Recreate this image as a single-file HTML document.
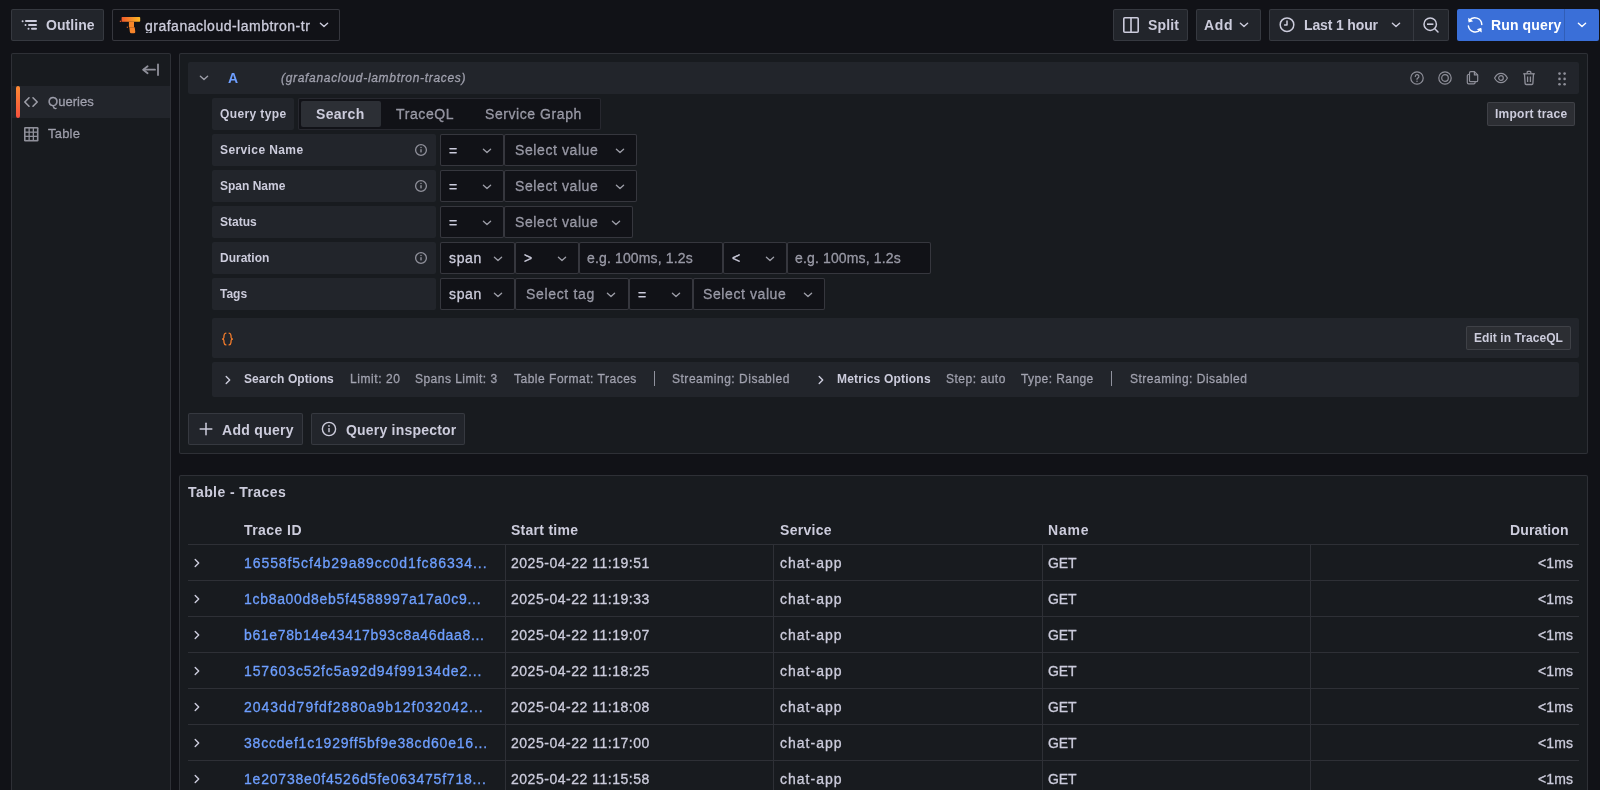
<!DOCTYPE html>
<html><head><meta charset="utf-8">
<style>
*{box-sizing:border-box;margin:0;padding:0}
html,body{width:1600px;height:790px;overflow:hidden;background:#111217;font-family:"Liberation Sans",sans-serif;color:#ccccdc;font-size:14px}
.a{position:absolute}
.t{position:absolute;white-space:pre;will-change:transform}
svg{position:absolute;display:block;overflow:visible}
</style></head><body>
<div class="a" style="left:11px;top:9px;width:93px;height:32px;background:#22252b;border:1px solid rgba(204,204,220,0.12);border-radius:2px;"></div>
<svg style="left:20px;top:17px" width="20" height="16" viewBox="0 0 20 16"><g fill="#ccccdc">
<rect x="5" y="3" width="12" height="2" rx="1"/><rect x="8" y="7" width="9" height="2" rx="1"/><rect x="11" y="10.8" width="6" height="2" rx="1"/>
<circle cx="2.6" cy="4.2" r="1"/><circle cx="5.5" cy="8" r="1"/><circle cx="8.5" cy="11.8" r="1"/></g></svg>
<div class="a" style="left:112px;top:9px;width:228px;height:32px;background:#111217;border:1px solid rgba(204,204,220,0.2);border-radius:2px;"></div>
<svg style="left:119px;top:15px" width="22" height="20" viewBox="0 0 22 20">
<defs><linearGradient id="tg" x1="0" y1="0" x2="1" y2="0"><stop offset="0" stop-color="#f15a2b"/><stop offset="1" stop-color="#fbb925"/></linearGradient></defs>
<path d="M3.2 1.9h17.2a0.8 0.8 0 0 1 0.8 0.8v3.3a0.8 0.8 0 0 1-0.8 0.8H3.2a0.6 0.6 0 0 1-0.6-0.6V2.5a0.6 0.6 0 0 1 0.6-0.6z" fill="url(#tg)"/>
<path d="M9.9 6.8h5.1v5.5H9.9z" fill="#f6862a"/>
<path d="M10.3 12.3h5.4l0.6 4.6a1.4 1.4 0 0 1-1.4 1.4h-2.6a1.4 1.4 0 0 1-1.4-1.2z" fill="#f7842a"/>
<rect x="0.8" y="5.7" width="1.3" height="1.2" fill="#ee5a2a"/><rect x="7.8" y="11.6" width="1" height="1.3" fill="#ee6a2a"/>
</svg>
<svg style="left:317.5px;top:20px" width="12" height="10" viewBox="0 0 12 10"><polyline points="2.4,3.3 6,6.6 9.6,3.3" fill="none" stroke="#ccccdc" stroke-width="1.4" stroke-linecap="round" stroke-linejoin="round"/></svg>
<div class="a" style="left:1113px;top:9px;width:75px;height:32px;background:#22252b;border:1px solid rgba(204,204,220,0.12);border-radius:2px;"></div>
<svg style="left:1122px;top:16px" width="18" height="18" viewBox="0 0 18 18"><rect x="1.8" y="1.8" width="14.4" height="14.4" rx="1" fill="none" stroke="#ccccdc" stroke-width="1.6"/><line x1="9" y1="2" x2="9" y2="16" stroke="#ccccdc" stroke-width="1.6"/></svg>
<div class="a" style="left:1196px;top:9px;width:65px;height:32px;background:#22252b;border:1px solid rgba(204,204,220,0.12);border-radius:2px;"></div>
<svg style="left:1238px;top:20px" width="12" height="10" viewBox="0 0 12 10"><polyline points="2.4,3.3 6,6.6 9.6,3.3" fill="none" stroke="#ccccdc" stroke-width="1.4" stroke-linecap="round" stroke-linejoin="round"/></svg>
<div class="a" style="left:1269px;top:9px;width:180px;height:32px;background:#22252b;border:1px solid rgba(204,204,220,0.12);border-radius:2px;"></div>
<div class="a" style="left:1413px;top:9px;width:1px;height:32px;background:rgba(204,204,220,0.12);"></div>
<svg style="left:1278px;top:16px" width="18" height="18" viewBox="0 0 18 18"><circle cx="9" cy="8.7" r="6.8" fill="none" stroke="#ccccdc" stroke-width="1.5"/><polyline points="9,5 9,9 6.6,9" fill="none" stroke="#ccccdc" stroke-width="1.5" stroke-linecap="round" stroke-linejoin="round"/></svg>
<svg style="left:1390px;top:20px" width="12" height="10" viewBox="0 0 12 10"><polyline points="2.4,3.3 6,6.6 9.6,3.3" fill="none" stroke="#ccccdc" stroke-width="1.4" stroke-linecap="round" stroke-linejoin="round"/></svg>
<svg style="left:1422px;top:16px" width="18" height="18" viewBox="0 0 18 18"><circle cx="8.2" cy="8.2" r="6.2" fill="none" stroke="#ccccdc" stroke-width="1.5"/><line x1="5" y1="8.2" x2="11.4" y2="8.2" stroke="#ccccdc" stroke-width="1.6"/><line x1="12.8" y1="12.8" x2="16" y2="16" stroke="#ccccdc" stroke-width="1.5" stroke-linecap="round"/></svg>
<div class="a" style="left:1457px;top:9px;width:142px;height:32px;background:#3a6fd8;border-radius:2px;"></div>
<div class="a" style="left:1564px;top:9px;width:1px;height:32px;background:rgba(0,0,0,0.15);"></div>
<svg style="left:1466px;top:16px" width="18" height="18" viewBox="0 0 18 18"><g fill="none" stroke="#fff" stroke-width="1.5" stroke-linecap="round">
<path d="M3.2 4.6A7 7 0 0 1 15.8 8.6"/><path d="M2.4 10A7 7 0 0 0 14.6 13.6"/></g>
<g fill="#fff"><path d="M2.2 1.8L2.6 6.6L7.2 5.2Z"/><path d="M15.8 16.4L15.3 11.8L10.8 13.2Z"/></g></svg>
<svg style="left:1575.5px;top:20px" width="12" height="10" viewBox="0 0 12 10"><polyline points="2.4,3.3 6,6.6 9.6,3.3" fill="none" stroke="#fff" stroke-width="1.4" stroke-linecap="round" stroke-linejoin="round"/></svg>
<div class="a" style="left:11px;top:53px;width:160px;height:800px;background:#181b1f;border:1px solid rgba(204,204,220,0.12);border-radius:2px;"></div>
<svg style="left:140px;top:60px" width="22" height="20" viewBox="0 0 22 20"><g fill="none" stroke="#8f909a" stroke-width="1.8" stroke-linecap="round" stroke-linejoin="round"><polyline points="7.6,6.3 3.2,9.7 7.6,13.3"/><line x1="3.6" y1="9.7" x2="15" y2="9.7"/><line x1="18" y1="4.5" x2="18" y2="15"/></g></svg>
<div class="a" style="left:12px;top:86px;width:158px;height:32px;background:#22252b;"></div>
<div class="a" style="left:16px;top:86px;width:4px;height:32px;background:linear-gradient(#ff8a33,#f5503e);border-radius:2px;"></div>
<svg style="left:22px;top:94px" width="18" height="16" viewBox="0 0 18 16"><g fill="none" stroke="#9d9ea8" stroke-width="1.6" stroke-linecap="round" stroke-linejoin="round"><polyline points="7,3.8 2.8,8 7,12.2"/><polyline points="11,3.8 15.2,8 11,12.2"/></g></svg>
<svg style="left:22px;top:125px" width="18" height="18" viewBox="0 0 18 18"><rect x="2" y="2" width="14.5" height="14.5" rx="1.2" fill="#8f909a"/>
<g fill="#181b1f"><rect x="3.6" y="3.6" width="2.9" height="2.9"/><rect x="7.8" y="3.6" width="2.9" height="2.9"/><rect x="12" y="3.6" width="2.9" height="2.9"/>
<rect x="3.6" y="7.8" width="2.9" height="2.9"/><rect x="7.8" y="7.8" width="2.9" height="2.9"/><rect x="12" y="7.8" width="2.9" height="2.9"/>
<rect x="3.6" y="12" width="2.9" height="2.9"/><rect x="7.8" y="12" width="2.9" height="2.9"/><rect x="12" y="12" width="2.9" height="2.9"/></g></svg>
<div class="a" style="left:179px;top:53px;width:1409px;height:401px;background:#181b1f;border:1px solid rgba(204,204,220,0.12);border-radius:2px;"></div>
<div class="a" style="left:188px;top:62px;width:1391px;height:32px;background:#22252b;border-radius:2px;"></div>
<svg style="left:198px;top:73px" width="12" height="10" viewBox="0 0 12 10"><polyline points="2.4,3.3 6,6.6 9.6,3.3" fill="none" stroke="#9d9ea8" stroke-width="1.4" stroke-linecap="round" stroke-linejoin="round"/></svg>
<svg style="left:1409px;top:70px" width="16" height="16" viewBox="0 0 16 16"><circle cx="8" cy="8" r="6.2" fill="none" stroke="#8e8f99" stroke-width="1.2"/><path d="M6.3 6.4a1.8 1.8 0 1 1 2.5 1.7c-.6.3-.8.6-.8 1.2" fill="none" stroke="#8e8f99" stroke-width="1.2" stroke-linecap="round"/><circle cx="8" cy="11.2" r=".75" fill="#8e8f99"/></svg>
<svg style="left:1437px;top:70px" width="16" height="16" viewBox="0 0 16 16"><circle cx="8" cy="8" r="6.2" fill="none" stroke="#8e8f99" stroke-width="1.2"/><circle cx="8" cy="8" r="3.3" fill="none" stroke="#8e8f99" stroke-width="1.2"/></svg>
<svg style="left:1465px;top:70px" width="16" height="16" viewBox="0 0 16 16"><g fill="none" stroke="#8e8f99" stroke-width="1.2" stroke-linejoin="round"><path d="M5.8 1.6h3.6l3.3 3.3v5.5a1.3 1.3 0 0 1-1.3 1.3H5.8a1.3 1.3 0 0 1-1.3-1.3V2.9a1.3 1.3 0 0 1 1.3-1.3z"/><path d="M4.5 4.5H3.6a1.3 1.3 0 0 0-1.3 1.3v6.8a1.3 1.3 0 0 0 1.3 1.3h5.2a1.3 1.3 0 0 0 1.3-1.3v-.9"/><path d="M9.4 1.6v3.3h3.3"/></g></svg>
<svg style="left:1493px;top:70px" width="16" height="16" viewBox="0 0 16 16"><path d="M1.6 8C3 5.2 5.3 3.3 8 3.3s5 1.9 6.4 4.7C13 10.8 10.7 12.7 8 12.7S3 10.8 1.6 8z" fill="none" stroke="#8e8f99" stroke-width="1.2" stroke-linejoin="round"/><circle cx="8" cy="8" r="2.3" fill="none" stroke="#8e8f99" stroke-width="1.2"/></svg>
<svg style="left:1521px;top:70px" width="16" height="16" viewBox="0 0 16 16"><g fill="none" stroke="#8e8f99" stroke-width="1.3" stroke-linejoin="round"><path d="M2.2 3.8h11.6"/><path d="M6.2 3.6V2.2a.8.8 0 0 1 .8-.8h2a.8.8 0 0 1 .8.8v1.4"/><path d="M3.5 3.8l.6 9.6a1.2 1.2 0 0 0 1.2 1.1h5.4a1.2 1.2 0 0 0 1.2-1.1l.6-9.6"/><path d="M6.6 6.5v5.4M9.4 6.5v5.4"/></g></svg>
<svg style="left:1554px;top:70px" width="16" height="16" viewBox="0 0 16 16"><g fill="#8e8f99"><circle cx="5.5" cy="3.6" r="1.3"/><circle cx="10.6" cy="3.6" r="1.3"/><circle cx="5.5" cy="8.9" r="1.3"/><circle cx="10.6" cy="8.9" r="1.3"/><circle cx="5.5" cy="14.3" r="1.3"/><circle cx="10.6" cy="14.3" r="1.3"/></g></svg>
<div class="a" style="left:1487px;top:102px;width:88px;height:24px;background:#2c2e33;border:1px solid rgba(204,204,220,0.12);border-radius:2px;"></div>
<div class="a" style="left:212px;top:98px;width:82px;height:32px;background:#22252b;border-radius:2px;"></div>
<div class="a" style="left:298px;top:98px;width:303px;height:32px;background:#111217;border:1px solid rgba(204,204,220,0.12);border-radius:2px;"></div>
<div class="a" style="left:301px;top:101px;width:80px;height:26px;background:#2c2f35;border-radius:2px;"></div>
<div class="a" style="left:212px;top:134px;width:224px;height:32px;background:#22252b;border-radius:2px;"></div>
<svg style="left:413px;top:142px" width="16" height="16" viewBox="0 0 16 16"><circle cx="8" cy="8" r="5.4" fill="none" stroke="#8f909a" stroke-width="1.3"/><rect x="7.3" y="7.2" width="1.4" height="3.2" fill="#8f909a"/><circle cx="8" cy="5.6" r=".75" fill="#8f909a"/></svg>
<div class="a" style="left:212px;top:170px;width:224px;height:32px;background:#22252b;border-radius:2px;"></div>
<svg style="left:413px;top:178px" width="16" height="16" viewBox="0 0 16 16"><circle cx="8" cy="8" r="5.4" fill="none" stroke="#8f909a" stroke-width="1.3"/><rect x="7.3" y="7.2" width="1.4" height="3.2" fill="#8f909a"/><circle cx="8" cy="5.6" r=".75" fill="#8f909a"/></svg>
<div class="a" style="left:212px;top:206px;width:224px;height:32px;background:#22252b;border-radius:2px;"></div>
<div class="a" style="left:212px;top:242px;width:224px;height:32px;background:#22252b;border-radius:2px;"></div>
<svg style="left:413px;top:250px" width="16" height="16" viewBox="0 0 16 16"><circle cx="8" cy="8" r="5.4" fill="none" stroke="#8f909a" stroke-width="1.3"/><rect x="7.3" y="7.2" width="1.4" height="3.2" fill="#8f909a"/><circle cx="8" cy="5.6" r=".75" fill="#8f909a"/></svg>
<div class="a" style="left:212px;top:278px;width:224px;height:32px;background:#22252b;border-radius:2px;"></div>
<div class="a" style="left:440px;top:134px;width:64px;height:32px;background:#111217;border:1px solid rgba(204,204,220,0.2);border-radius:2px;"></div>
<svg style="left:481px;top:145.5px" width="12" height="10" viewBox="0 0 12 10"><polyline points="2.4,3.3 6,6.6 9.6,3.3" fill="none" stroke="#9d9ea8" stroke-width="1.3" stroke-linecap="round" stroke-linejoin="round"/></svg>
<div class="a" style="left:504px;top:134px;width:133px;height:32px;background:#111217;border:1px solid rgba(204,204,220,0.2);border-radius:2px;"></div>
<svg style="left:613.5px;top:145.5px" width="12" height="10" viewBox="0 0 12 10"><polyline points="2.4,3.3 6,6.6 9.6,3.3" fill="none" stroke="#9d9ea8" stroke-width="1.3" stroke-linecap="round" stroke-linejoin="round"/></svg>
<div class="a" style="left:440px;top:170px;width:64px;height:32px;background:#111217;border:1px solid rgba(204,204,220,0.2);border-radius:2px;"></div>
<svg style="left:481px;top:181.5px" width="12" height="10" viewBox="0 0 12 10"><polyline points="2.4,3.3 6,6.6 9.6,3.3" fill="none" stroke="#9d9ea8" stroke-width="1.3" stroke-linecap="round" stroke-linejoin="round"/></svg>
<div class="a" style="left:504px;top:170px;width:133px;height:32px;background:#111217;border:1px solid rgba(204,204,220,0.2);border-radius:2px;"></div>
<svg style="left:613.5px;top:181.5px" width="12" height="10" viewBox="0 0 12 10"><polyline points="2.4,3.3 6,6.6 9.6,3.3" fill="none" stroke="#9d9ea8" stroke-width="1.3" stroke-linecap="round" stroke-linejoin="round"/></svg>
<div class="a" style="left:440px;top:206px;width:64px;height:32px;background:#111217;border:1px solid rgba(204,204,220,0.2);border-radius:2px;"></div>
<svg style="left:481px;top:217.5px" width="12" height="10" viewBox="0 0 12 10"><polyline points="2.4,3.3 6,6.6 9.6,3.3" fill="none" stroke="#9d9ea8" stroke-width="1.3" stroke-linecap="round" stroke-linejoin="round"/></svg>
<div class="a" style="left:504px;top:206px;width:129px;height:32px;background:#111217;border:1px solid rgba(204,204,220,0.2);border-radius:2px;"></div>
<svg style="left:609.5px;top:217.5px" width="12" height="10" viewBox="0 0 12 10"><polyline points="2.4,3.3 6,6.6 9.6,3.3" fill="none" stroke="#9d9ea8" stroke-width="1.3" stroke-linecap="round" stroke-linejoin="round"/></svg>
<div class="a" style="left:440px;top:242px;width:75px;height:32px;background:#111217;border:1px solid rgba(204,204,220,0.2);border-radius:2px;"></div>
<svg style="left:491.5px;top:253.5px" width="12" height="10" viewBox="0 0 12 10"><polyline points="2.4,3.3 6,6.6 9.6,3.3" fill="none" stroke="#9d9ea8" stroke-width="1.3" stroke-linecap="round" stroke-linejoin="round"/></svg>
<div class="a" style="left:515px;top:242px;width:64px;height:32px;background:#111217;border:1px solid rgba(204,204,220,0.2);border-radius:2px;"></div>
<svg style="left:555.5px;top:253.5px" width="12" height="10" viewBox="0 0 12 10"><polyline points="2.4,3.3 6,6.6 9.6,3.3" fill="none" stroke="#9d9ea8" stroke-width="1.3" stroke-linecap="round" stroke-linejoin="round"/></svg>
<div class="a" style="left:579px;top:242px;width:144px;height:32px;background:#111217;border:1px solid rgba(204,204,220,0.2);border-radius:2px;"></div>
<div class="a" style="left:723px;top:242px;width:64px;height:32px;background:#111217;border:1px solid rgba(204,204,220,0.2);border-radius:2px;"></div>
<svg style="left:763.5px;top:253.5px" width="12" height="10" viewBox="0 0 12 10"><polyline points="2.4,3.3 6,6.6 9.6,3.3" fill="none" stroke="#9d9ea8" stroke-width="1.3" stroke-linecap="round" stroke-linejoin="round"/></svg>
<div class="a" style="left:787px;top:242px;width:144px;height:32px;background:#111217;border:1px solid rgba(204,204,220,0.2);border-radius:2px;"></div>
<div class="a" style="left:440px;top:278px;width:75px;height:32px;background:#111217;border:1px solid rgba(204,204,220,0.2);border-radius:2px;"></div>
<svg style="left:491.5px;top:289.5px" width="12" height="10" viewBox="0 0 12 10"><polyline points="2.4,3.3 6,6.6 9.6,3.3" fill="none" stroke="#9d9ea8" stroke-width="1.3" stroke-linecap="round" stroke-linejoin="round"/></svg>
<div class="a" style="left:515px;top:278px;width:114px;height:32px;background:#111217;border:1px solid rgba(204,204,220,0.2);border-radius:2px;"></div>
<svg style="left:605px;top:289.5px" width="12" height="10" viewBox="0 0 12 10"><polyline points="2.4,3.3 6,6.6 9.6,3.3" fill="none" stroke="#9d9ea8" stroke-width="1.3" stroke-linecap="round" stroke-linejoin="round"/></svg>
<div class="a" style="left:629px;top:278px;width:64px;height:32px;background:#111217;border:1px solid rgba(204,204,220,0.2);border-radius:2px;"></div>
<svg style="left:669.5px;top:289.5px" width="12" height="10" viewBox="0 0 12 10"><polyline points="2.4,3.3 6,6.6 9.6,3.3" fill="none" stroke="#9d9ea8" stroke-width="1.3" stroke-linecap="round" stroke-linejoin="round"/></svg>
<div class="a" style="left:693px;top:278px;width:132px;height:32px;background:#111217;border:1px solid rgba(204,204,220,0.2);border-radius:2px;"></div>
<svg style="left:801.5px;top:289.5px" width="12" height="10" viewBox="0 0 12 10"><polyline points="2.4,3.3 6,6.6 9.6,3.3" fill="none" stroke="#9d9ea8" stroke-width="1.3" stroke-linecap="round" stroke-linejoin="round"/></svg>
<div class="a" style="left:212px;top:318px;width:1367px;height:40px;background:#22252b;border-radius:2px;"></div>
<svg style="left:0;top:0" width="1" height="1"><g fill="none" stroke="#ee7a2c" stroke-width="1.3" stroke-linecap="round"><path d="M225.9 333.2C224.5 333.4 224.1 334.2 224 335.6L223.9 337.5C223.8 338.5 223.3 339 222.1 339C223.3 339 223.8 339.5 223.9 340.5L224 342.4C224.1 343.8 224.5 344.6 225.9 344.8"/><path d="M229.1 333.2C230.5 333.4 230.9 334.2 231 335.6L231.1 337.5C231.2 338.5 231.7 339 232.9 339C231.7 339 231.2 339.5 231.1 340.5L231 342.4C230.9 343.8 230.5 344.6 229.1 344.8"/></g></svg>
<div class="a" style="left:1466px;top:326px;width:105px;height:24px;background:#2c2e33;border:1px solid rgba(204,204,220,0.12);border-radius:2px;"></div>
<div class="a" style="left:212px;top:362px;width:1367px;height:35px;background:#22252b;border-radius:2px;"></div>
<svg style="left:223px;top:374px" width="10" height="12" viewBox="0 0 10 12"><polyline points="3.2,2.5 6.7,6 3.2,9.5" fill="none" stroke="#ccccdc" stroke-width="1.4" stroke-linecap="round" stroke-linejoin="round"/></svg>
<div class="a" style="left:654px;top:371px;width:1px;height:15px;background:rgba(204,204,220,0.65);"></div>
<svg style="left:816px;top:374px" width="10" height="12" viewBox="0 0 10 12"><polyline points="3.2,2.5 6.7,6 3.2,9.5" fill="none" stroke="#ccccdc" stroke-width="1.4" stroke-linecap="round" stroke-linejoin="round"/></svg>
<div class="a" style="left:1111px;top:371px;width:1px;height:15px;background:rgba(204,204,220,0.65);"></div>
<div class="a" style="left:188px;top:413px;width:115px;height:32px;background:#22252b;border:1px solid rgba(204,204,220,0.12);border-radius:2px;"></div>
<svg style="left:198px;top:421px" width="16" height="16" viewBox="0 0 16 16"><g stroke="#ccccdc" stroke-width="1.5" stroke-linecap="round"><line x1="8" y1="2.2" x2="8" y2="13.8"/><line x1="2.2" y1="8" x2="13.8" y2="8"/></g></svg>
<div class="a" style="left:311px;top:413px;width:154px;height:32px;background:#22252b;border:1px solid rgba(204,204,220,0.12);border-radius:2px;"></div>
<svg style="left:321px;top:421px" width="16" height="16" viewBox="0 0 16 16"><circle cx="8" cy="8" r="6.6" fill="none" stroke="#ccccdc" stroke-width="1.4"/><rect x="7.3" y="7" width="1.4" height="4.2" fill="#ccccdc"/><circle cx="8" cy="4.9" r=".85" fill="#ccccdc"/></svg>
<div class="a" style="left:179px;top:475px;width:1409px;height:400px;background:#181b1f;border:1px solid rgba(204,204,220,0.12);border-radius:2px;"></div>
<div class="a" style="left:188px;top:544px;width:1391px;height:1px;background:rgba(204,204,220,0.12);"></div>
<div class="a" style="left:188px;top:580px;width:1391px;height:1px;background:rgba(204,204,220,0.12);"></div>
<div class="a" style="left:505px;top:545px;width:1px;height:35px;background:rgba(204,204,220,0.12);"></div>
<div class="a" style="left:773px;top:545px;width:1px;height:35px;background:rgba(204,204,220,0.12);"></div>
<div class="a" style="left:1042px;top:545px;width:1px;height:35px;background:rgba(204,204,220,0.12);"></div>
<div class="a" style="left:1310px;top:545px;width:1px;height:35px;background:rgba(204,204,220,0.12);"></div>
<svg style="left:192px;top:557px" width="10" height="12" viewBox="0 0 10 12"><polyline points="3.2,2.5 6.7,6 3.2,9.5" fill="none" stroke="#ccccdc" stroke-width="1.4" stroke-linecap="round" stroke-linejoin="round"/></svg>
<div class="a" style="left:188px;top:616px;width:1391px;height:1px;background:rgba(204,204,220,0.12);"></div>
<div class="a" style="left:505px;top:581px;width:1px;height:35px;background:rgba(204,204,220,0.12);"></div>
<div class="a" style="left:773px;top:581px;width:1px;height:35px;background:rgba(204,204,220,0.12);"></div>
<div class="a" style="left:1042px;top:581px;width:1px;height:35px;background:rgba(204,204,220,0.12);"></div>
<div class="a" style="left:1310px;top:581px;width:1px;height:35px;background:rgba(204,204,220,0.12);"></div>
<svg style="left:192px;top:593px" width="10" height="12" viewBox="0 0 10 12"><polyline points="3.2,2.5 6.7,6 3.2,9.5" fill="none" stroke="#ccccdc" stroke-width="1.4" stroke-linecap="round" stroke-linejoin="round"/></svg>
<div class="a" style="left:188px;top:652px;width:1391px;height:1px;background:rgba(204,204,220,0.12);"></div>
<div class="a" style="left:505px;top:617px;width:1px;height:35px;background:rgba(204,204,220,0.12);"></div>
<div class="a" style="left:773px;top:617px;width:1px;height:35px;background:rgba(204,204,220,0.12);"></div>
<div class="a" style="left:1042px;top:617px;width:1px;height:35px;background:rgba(204,204,220,0.12);"></div>
<div class="a" style="left:1310px;top:617px;width:1px;height:35px;background:rgba(204,204,220,0.12);"></div>
<svg style="left:192px;top:629px" width="10" height="12" viewBox="0 0 10 12"><polyline points="3.2,2.5 6.7,6 3.2,9.5" fill="none" stroke="#ccccdc" stroke-width="1.4" stroke-linecap="round" stroke-linejoin="round"/></svg>
<div class="a" style="left:188px;top:688px;width:1391px;height:1px;background:rgba(204,204,220,0.12);"></div>
<div class="a" style="left:505px;top:653px;width:1px;height:35px;background:rgba(204,204,220,0.12);"></div>
<div class="a" style="left:773px;top:653px;width:1px;height:35px;background:rgba(204,204,220,0.12);"></div>
<div class="a" style="left:1042px;top:653px;width:1px;height:35px;background:rgba(204,204,220,0.12);"></div>
<div class="a" style="left:1310px;top:653px;width:1px;height:35px;background:rgba(204,204,220,0.12);"></div>
<svg style="left:192px;top:665px" width="10" height="12" viewBox="0 0 10 12"><polyline points="3.2,2.5 6.7,6 3.2,9.5" fill="none" stroke="#ccccdc" stroke-width="1.4" stroke-linecap="round" stroke-linejoin="round"/></svg>
<div class="a" style="left:188px;top:724px;width:1391px;height:1px;background:rgba(204,204,220,0.12);"></div>
<div class="a" style="left:505px;top:689px;width:1px;height:35px;background:rgba(204,204,220,0.12);"></div>
<div class="a" style="left:773px;top:689px;width:1px;height:35px;background:rgba(204,204,220,0.12);"></div>
<div class="a" style="left:1042px;top:689px;width:1px;height:35px;background:rgba(204,204,220,0.12);"></div>
<div class="a" style="left:1310px;top:689px;width:1px;height:35px;background:rgba(204,204,220,0.12);"></div>
<svg style="left:192px;top:701px" width="10" height="12" viewBox="0 0 10 12"><polyline points="3.2,2.5 6.7,6 3.2,9.5" fill="none" stroke="#ccccdc" stroke-width="1.4" stroke-linecap="round" stroke-linejoin="round"/></svg>
<div class="a" style="left:188px;top:760px;width:1391px;height:1px;background:rgba(204,204,220,0.12);"></div>
<div class="a" style="left:505px;top:725px;width:1px;height:35px;background:rgba(204,204,220,0.12);"></div>
<div class="a" style="left:773px;top:725px;width:1px;height:35px;background:rgba(204,204,220,0.12);"></div>
<div class="a" style="left:1042px;top:725px;width:1px;height:35px;background:rgba(204,204,220,0.12);"></div>
<div class="a" style="left:1310px;top:725px;width:1px;height:35px;background:rgba(204,204,220,0.12);"></div>
<svg style="left:192px;top:737px" width="10" height="12" viewBox="0 0 10 12"><polyline points="3.2,2.5 6.7,6 3.2,9.5" fill="none" stroke="#ccccdc" stroke-width="1.4" stroke-linecap="round" stroke-linejoin="round"/></svg>
<div class="a" style="left:188px;top:796px;width:1391px;height:1px;background:rgba(204,204,220,0.12);"></div>
<div class="a" style="left:505px;top:761px;width:1px;height:35px;background:rgba(204,204,220,0.12);"></div>
<div class="a" style="left:773px;top:761px;width:1px;height:35px;background:rgba(204,204,220,0.12);"></div>
<div class="a" style="left:1042px;top:761px;width:1px;height:35px;background:rgba(204,204,220,0.12);"></div>
<div class="a" style="left:1310px;top:761px;width:1px;height:35px;background:rgba(204,204,220,0.12);"></div>
<svg style="left:192px;top:773px" width="10" height="12" viewBox="0 0 10 12"><polyline points="3.2,2.5 6.7,6 3.2,9.5" fill="none" stroke="#ccccdc" stroke-width="1.4" stroke-linecap="round" stroke-linejoin="round"/></svg>
<div class="t" style="top:17.95px;font-size:14px;line-height:14px;color:#ccccdc;font-weight:bold;letter-spacing:0.054px;left:46.06px;">Outline</div>
<div class="t" style="top:18.65px;font-size:14px;line-height:14px;color:#ccccdc;-webkit-text-stroke:0.3px #ccccdc;left:145.16px;width:165px;overflow:hidden;letter-spacing:0.5px;">grafanacloud-lambtron-traces</div>
<div class="t" style="top:18.15px;font-size:14px;line-height:14px;color:#ccccdc;font-weight:bold;letter-spacing:0.129px;left:1147.56px;">Split</div>
<div class="t" style="top:18.15px;font-size:14px;line-height:14px;color:#ccccdc;font-weight:bold;letter-spacing:0.671px;left:1203.86px;">Add</div>
<div class="t" style="top:18.05px;font-size:14px;line-height:14px;color:#ccccdc;font-weight:bold;letter-spacing:-0.141px;left:1303.96px;">Last 1 hour</div>
<div class="t" style="top:18.15px;font-size:14px;line-height:14px;color:#ffffff;font-weight:bold;letter-spacing:0.128px;left:1491.16px;">Run query</div>
<div class="t" style="top:95.19px;font-size:13px;line-height:13px;color:rgba(204,204,220,0.65);-webkit-text-stroke:0.3px rgba(204,204,220,0.65);letter-spacing:0.040px;left:47.52px;">Queries</div>
<div class="t" style="top:127.19px;font-size:13px;line-height:13px;color:rgba(204,204,220,0.65);-webkit-text-stroke:0.3px rgba(204,204,220,0.65);letter-spacing:0.198px;left:47.52px;">Table</div>
<div class="t" style="top:70.85px;font-size:14px;line-height:14px;color:#6e9fff;font-weight:bold;left:228.16px;">A</div>
<div class="t" style="top:71.54px;font-size:12px;line-height:12px;color:rgba(204,204,220,0.65);-webkit-text-stroke:0.3px rgba(204,204,220,0.65);font-style:italic;letter-spacing:0.680px;left:280.68px;">(grafanacloud-lambtron-traces)</div>
<div class="t" style="top:108.04px;font-size:12px;line-height:12px;color:#ccccdc;font-weight:bold;letter-spacing:0.247px;left:1494.88px;">Import trace</div>
<div class="t" style="top:107.94px;font-size:12px;line-height:12px;color:#ccccdc;font-weight:bold;letter-spacing:0.375px;left:220.08px;">Query type</div>
<div class="t" style="top:107.15px;font-size:14px;line-height:14px;color:#ccccdc;font-weight:bold;letter-spacing:0.311px;left:316.16px;">Search</div>
<div class="t" style="top:107.45px;font-size:14px;line-height:14px;color:rgba(204,204,220,0.65);-webkit-text-stroke:0.3px rgba(204,204,220,0.65);letter-spacing:0.601px;left:396.16px;">TraceQL</div>
<div class="t" style="top:107.45px;font-size:14px;line-height:14px;color:rgba(204,204,220,0.65);-webkit-text-stroke:0.3px rgba(204,204,220,0.65);letter-spacing:0.565px;left:485.16px;">Service Graph</div>
<div class="t" style="top:143.94px;font-size:12px;line-height:12px;color:#ccccdc;font-weight:bold;letter-spacing:0.395px;left:220.08px;">Service Name</div>
<div class="t" style="top:179.94px;font-size:12px;line-height:12px;color:#ccccdc;font-weight:bold;left:220.08px;">Span Name</div>
<div class="t" style="top:215.94px;font-size:12px;line-height:12px;color:#ccccdc;font-weight:bold;left:220.08px;">Status</div>
<div class="t" style="top:251.94px;font-size:12px;line-height:12px;color:#ccccdc;font-weight:bold;left:220.08px;">Duration</div>
<div class="t" style="top:287.94px;font-size:12px;line-height:12px;color:#ccccdc;font-weight:bold;left:220.08px;">Tags</div>
<div class="t" style="top:143.95px;font-size:14px;line-height:14px;color:#ccccdc;-webkit-text-stroke:0.3px #ccccdc;left:449.16px;">=</div>
<div class="t" style="top:143.35px;font-size:14px;line-height:14px;color:rgba(204,204,220,0.65);-webkit-text-stroke:0.3px rgba(204,204,220,0.65);letter-spacing:0.589px;left:514.66px;">Select value</div>
<div class="t" style="top:179.95px;font-size:14px;line-height:14px;color:#ccccdc;-webkit-text-stroke:0.3px #ccccdc;left:449.16px;">=</div>
<div class="t" style="top:179.35px;font-size:14px;line-height:14px;color:rgba(204,204,220,0.65);-webkit-text-stroke:0.3px rgba(204,204,220,0.65);letter-spacing:0.589px;left:514.66px;">Select value</div>
<div class="t" style="top:215.95px;font-size:14px;line-height:14px;color:#ccccdc;-webkit-text-stroke:0.3px #ccccdc;left:449.16px;">=</div>
<div class="t" style="top:215.35px;font-size:14px;line-height:14px;color:rgba(204,204,220,0.65);-webkit-text-stroke:0.3px rgba(204,204,220,0.65);letter-spacing:0.589px;left:514.66px;">Select value</div>
<div class="t" style="top:251.35px;font-size:14px;line-height:14px;color:#ccccdc;-webkit-text-stroke:0.3px #ccccdc;letter-spacing:0.634px;left:448.66px;">span</div>
<div class="t" style="top:251.35px;font-size:14px;line-height:14px;color:#ccccdc;-webkit-text-stroke:0.3px #ccccdc;left:524.16px;">&gt;</div>
<div class="t" style="top:251.35px;font-size:14px;line-height:14px;color:rgba(204,204,220,0.65);-webkit-text-stroke:0.3px rgba(204,204,220,0.65);letter-spacing:0.150px;left:587.46px;">e.g. 100ms, 1.2s</div>
<div class="t" style="top:251.35px;font-size:14px;line-height:14px;color:#ccccdc;-webkit-text-stroke:0.3px #ccccdc;left:732.16px;">&lt;</div>
<div class="t" style="top:251.35px;font-size:14px;line-height:14px;color:rgba(204,204,220,0.65);-webkit-text-stroke:0.3px rgba(204,204,220,0.65);letter-spacing:0.150px;left:795.46px;">e.g. 100ms, 1.2s</div>
<div class="t" style="top:287.35px;font-size:14px;line-height:14px;color:#ccccdc;-webkit-text-stroke:0.3px #ccccdc;letter-spacing:0.634px;left:448.66px;">span</div>
<div class="t" style="top:287.35px;font-size:14px;line-height:14px;color:rgba(204,204,220,0.65);-webkit-text-stroke:0.3px rgba(204,204,220,0.65);letter-spacing:0.666px;left:525.96px;">Select tag</div>
<div class="t" style="top:287.95px;font-size:14px;line-height:14px;color:#ccccdc;-webkit-text-stroke:0.3px #ccccdc;left:638.16px;">=</div>
<div class="t" style="top:287.35px;font-size:14px;line-height:14px;color:rgba(204,204,220,0.65);-webkit-text-stroke:0.3px rgba(204,204,220,0.65);letter-spacing:0.589px;left:703.16px;">Select value</div>
<div class="t" style="top:331.94px;font-size:12px;line-height:12px;color:#ccccdc;font-weight:bold;letter-spacing:0.061px;left:1473.88px;">Edit in TraceQL</div>
<div class="t" style="top:373.04px;font-size:12px;line-height:12px;color:#ccccdc;font-weight:bold;letter-spacing:0.084px;left:243.68px;">Search Options</div>
<div class="t" style="top:373.04px;font-size:12px;line-height:12px;color:rgba(204,204,220,0.65);-webkit-text-stroke:0.3px rgba(204,204,220,0.65);letter-spacing:0.578px;left:349.68px;">Limit: 20</div>
<div class="t" style="top:373.04px;font-size:12px;line-height:12px;color:rgba(204,204,220,0.65);-webkit-text-stroke:0.3px rgba(204,204,220,0.65);letter-spacing:0.464px;left:415.48px;">Spans Limit: 3</div>
<div class="t" style="top:373.04px;font-size:12px;line-height:12px;color:rgba(204,204,220,0.65);-webkit-text-stroke:0.3px rgba(204,204,220,0.65);letter-spacing:0.506px;left:514.28px;">Table Format: Traces</div>
<div class="t" style="top:373.04px;font-size:12px;line-height:12px;color:rgba(204,204,220,0.65);-webkit-text-stroke:0.3px rgba(204,204,220,0.65);letter-spacing:0.515px;left:671.78px;">Streaming: Disabled</div>
<div class="t" style="top:373.04px;font-size:12px;line-height:12px;color:#ccccdc;font-weight:bold;letter-spacing:0.207px;left:836.78px;">Metrics Options</div>
<div class="t" style="top:373.04px;font-size:12px;line-height:12px;color:rgba(204,204,220,0.65);-webkit-text-stroke:0.3px rgba(204,204,220,0.65);letter-spacing:0.518px;left:945.68px;">Step: auto</div>
<div class="t" style="top:373.04px;font-size:12px;line-height:12px;color:rgba(204,204,220,0.65);-webkit-text-stroke:0.3px rgba(204,204,220,0.65);letter-spacing:0.423px;left:1020.98px;">Type: Range</div>
<div class="t" style="top:373.04px;font-size:12px;line-height:12px;color:rgba(204,204,220,0.65);-webkit-text-stroke:0.3px rgba(204,204,220,0.65);letter-spacing:0.490px;left:1129.58px;">Streaming: Disabled</div>
<div class="t" style="top:422.55px;font-size:14px;line-height:14px;color:#ccccdc;font-weight:bold;letter-spacing:0.303px;left:222.46px;">Add query</div>
<div class="t" style="top:422.55px;font-size:14px;line-height:14px;color:#ccccdc;font-weight:bold;letter-spacing:0.206px;left:345.86px;">Query inspector</div>
<div class="t" style="top:485.15px;font-size:14px;line-height:14px;color:#ccccdc;font-weight:bold;letter-spacing:0.417px;left:188.16px;">Table - Traces</div>
<div class="t" style="top:523.35px;font-size:14px;line-height:14px;color:#ccccdc;font-weight:bold;letter-spacing:0.439px;left:243.56px;">Trace ID</div>
<div class="t" style="top:523.35px;font-size:14px;line-height:14px;color:#ccccdc;font-weight:bold;letter-spacing:0.265px;left:511.46px;">Start time</div>
<div class="t" style="top:523.35px;font-size:14px;line-height:14px;color:#ccccdc;font-weight:bold;letter-spacing:0.305px;left:780.16px;">Service</div>
<div class="t" style="top:523.35px;font-size:14px;line-height:14px;color:#ccccdc;font-weight:bold;letter-spacing:0.840px;left:1047.91px;">Name</div>
<div class="t" style="top:523.35px;font-size:14px;line-height:14px;color:#ccccdc;font-weight:bold;letter-spacing:0.142px;right:31.16px;">Duration</div>
<div class="t" style="top:556.15px;font-size:14px;line-height:14px;color:#6e9fff;-webkit-text-stroke:0.3px #6e9fff;letter-spacing:0.923px;left:243.56px;">16558f5cf4b29a89cc0d1fc86334...</div>
<div class="t" style="top:556.15px;font-size:14px;line-height:14px;color:#ccccdc;-webkit-text-stroke:0.3px #ccccdc;letter-spacing:0.516px;left:511.46px;">2025-04-22 11:19:51</div>
<div class="t" style="top:556.15px;font-size:14px;line-height:14px;color:#ccccdc;-webkit-text-stroke:0.3px #ccccdc;letter-spacing:1.011px;left:780.16px;">chat-app</div>
<div class="t" style="top:556.15px;font-size:14px;line-height:14px;color:#ccccdc;-webkit-text-stroke:0.3px #ccccdc;letter-spacing:-0.061px;left:1047.91px;">GET</div>
<div class="t" style="top:556.15px;font-size:14px;line-height:14px;color:#ccccdc;-webkit-text-stroke:0.3px #ccccdc;letter-spacing:0.145px;right:26.56px;">&lt;1ms</div>
<div class="t" style="top:592.15px;font-size:14px;line-height:14px;color:#6e9fff;-webkit-text-stroke:0.3px #6e9fff;letter-spacing:0.694px;left:243.56px;">1cb8a00d8eb5f4588997a17a0c9...</div>
<div class="t" style="top:592.15px;font-size:14px;line-height:14px;color:#ccccdc;-webkit-text-stroke:0.3px #ccccdc;letter-spacing:0.516px;left:511.46px;">2025-04-22 11:19:33</div>
<div class="t" style="top:592.15px;font-size:14px;line-height:14px;color:#ccccdc;-webkit-text-stroke:0.3px #ccccdc;letter-spacing:1.011px;left:780.16px;">chat-app</div>
<div class="t" style="top:592.15px;font-size:14px;line-height:14px;color:#ccccdc;-webkit-text-stroke:0.3px #ccccdc;letter-spacing:-0.061px;left:1047.91px;">GET</div>
<div class="t" style="top:592.15px;font-size:14px;line-height:14px;color:#ccccdc;-webkit-text-stroke:0.3px #ccccdc;letter-spacing:0.145px;right:26.56px;">&lt;1ms</div>
<div class="t" style="top:628.15px;font-size:14px;line-height:14px;color:#6e9fff;-webkit-text-stroke:0.3px #6e9fff;letter-spacing:0.647px;left:243.56px;">b61e78b14e43417b93c8a46daa8...</div>
<div class="t" style="top:628.15px;font-size:14px;line-height:14px;color:#ccccdc;-webkit-text-stroke:0.3px #ccccdc;letter-spacing:0.516px;left:511.46px;">2025-04-22 11:19:07</div>
<div class="t" style="top:628.15px;font-size:14px;line-height:14px;color:#ccccdc;-webkit-text-stroke:0.3px #ccccdc;letter-spacing:1.011px;left:780.16px;">chat-app</div>
<div class="t" style="top:628.15px;font-size:14px;line-height:14px;color:#ccccdc;-webkit-text-stroke:0.3px #ccccdc;letter-spacing:-0.061px;left:1047.91px;">GET</div>
<div class="t" style="top:628.15px;font-size:14px;line-height:14px;color:#ccccdc;-webkit-text-stroke:0.3px #ccccdc;letter-spacing:0.145px;right:26.56px;">&lt;1ms</div>
<div class="t" style="top:664.15px;font-size:14px;line-height:14px;color:#6e9fff;-webkit-text-stroke:0.3px #6e9fff;letter-spacing:0.860px;left:243.56px;">157603c52fc5a92d94f99134de2...</div>
<div class="t" style="top:664.15px;font-size:14px;line-height:14px;color:#ccccdc;-webkit-text-stroke:0.3px #ccccdc;letter-spacing:0.516px;left:511.46px;">2025-04-22 11:18:25</div>
<div class="t" style="top:664.15px;font-size:14px;line-height:14px;color:#ccccdc;-webkit-text-stroke:0.3px #ccccdc;letter-spacing:1.011px;left:780.16px;">chat-app</div>
<div class="t" style="top:664.15px;font-size:14px;line-height:14px;color:#ccccdc;-webkit-text-stroke:0.3px #ccccdc;letter-spacing:-0.061px;left:1047.91px;">GET</div>
<div class="t" style="top:664.15px;font-size:14px;line-height:14px;color:#ccccdc;-webkit-text-stroke:0.3px #ccccdc;letter-spacing:0.145px;right:26.56px;">&lt;1ms</div>
<div class="t" style="top:700.15px;font-size:14px;line-height:14px;color:#6e9fff;-webkit-text-stroke:0.3px #6e9fff;letter-spacing:0.984px;left:243.56px;">2043dd79fdf2880a9b12f032042...</div>
<div class="t" style="top:700.15px;font-size:14px;line-height:14px;color:#ccccdc;-webkit-text-stroke:0.3px #ccccdc;letter-spacing:0.516px;left:511.46px;">2025-04-22 11:18:08</div>
<div class="t" style="top:700.15px;font-size:14px;line-height:14px;color:#ccccdc;-webkit-text-stroke:0.3px #ccccdc;letter-spacing:1.011px;left:780.16px;">chat-app</div>
<div class="t" style="top:700.15px;font-size:14px;line-height:14px;color:#ccccdc;-webkit-text-stroke:0.3px #ccccdc;letter-spacing:-0.061px;left:1047.91px;">GET</div>
<div class="t" style="top:700.15px;font-size:14px;line-height:14px;color:#ccccdc;-webkit-text-stroke:0.3px #ccccdc;letter-spacing:0.145px;right:26.56px;">&lt;1ms</div>
<div class="t" style="top:736.15px;font-size:14px;line-height:14px;color:#6e9fff;-webkit-text-stroke:0.3px #6e9fff;letter-spacing:0.796px;left:243.56px;">38ccdef1c1929ff5bf9e38cd60e16...</div>
<div class="t" style="top:736.15px;font-size:14px;line-height:14px;color:#ccccdc;-webkit-text-stroke:0.3px #ccccdc;letter-spacing:0.516px;left:511.46px;">2025-04-22 11:17:00</div>
<div class="t" style="top:736.15px;font-size:14px;line-height:14px;color:#ccccdc;-webkit-text-stroke:0.3px #ccccdc;letter-spacing:1.011px;left:780.16px;">chat-app</div>
<div class="t" style="top:736.15px;font-size:14px;line-height:14px;color:#ccccdc;-webkit-text-stroke:0.3px #ccccdc;letter-spacing:-0.061px;left:1047.91px;">GET</div>
<div class="t" style="top:736.15px;font-size:14px;line-height:14px;color:#ccccdc;-webkit-text-stroke:0.3px #ccccdc;letter-spacing:0.145px;right:26.56px;">&lt;1ms</div>
<div class="t" style="top:772.15px;font-size:14px;line-height:14px;color:#6e9fff;-webkit-text-stroke:0.3px #6e9fff;letter-spacing:0.795px;left:243.56px;">1e20738e0f4526d5fe063475f718...</div>
<div class="t" style="top:772.15px;font-size:14px;line-height:14px;color:#ccccdc;-webkit-text-stroke:0.3px #ccccdc;letter-spacing:0.516px;left:511.46px;">2025-04-22 11:15:58</div>
<div class="t" style="top:772.15px;font-size:14px;line-height:14px;color:#ccccdc;-webkit-text-stroke:0.3px #ccccdc;letter-spacing:1.011px;left:780.16px;">chat-app</div>
<div class="t" style="top:772.15px;font-size:14px;line-height:14px;color:#ccccdc;-webkit-text-stroke:0.3px #ccccdc;letter-spacing:-0.061px;left:1047.91px;">GET</div>
<div class="t" style="top:772.15px;font-size:14px;line-height:14px;color:#ccccdc;-webkit-text-stroke:0.3px #ccccdc;letter-spacing:0.145px;right:26.56px;">&lt;1ms</div>
</body></html>
